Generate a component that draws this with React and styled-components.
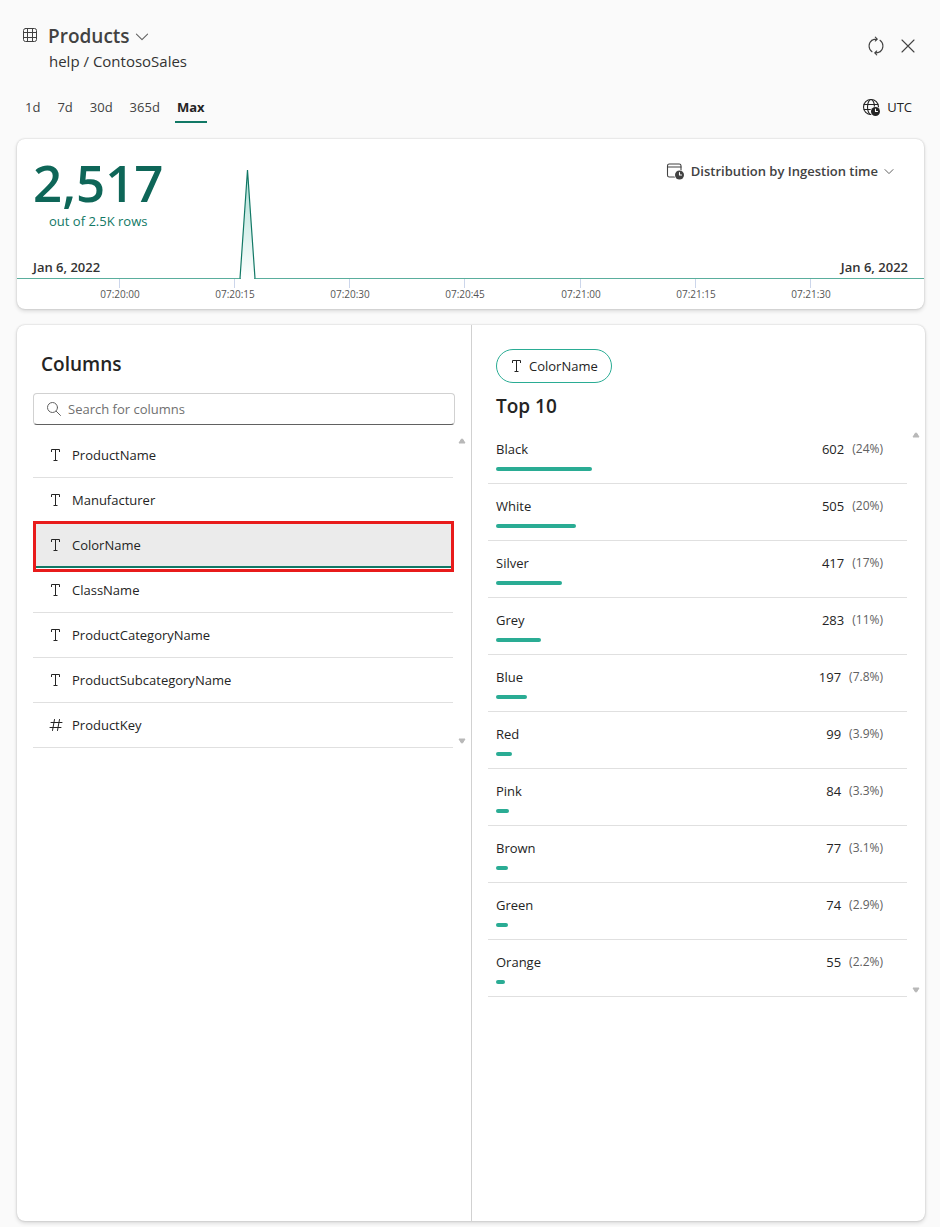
import React, { useState } from "react";
import styled, { createGlobalStyle } from "styled-components";

const GlobalStyle = createGlobalStyle`
  *, *::before, *::after { box-sizing: border-box; }
  body {
    margin: 0;
    background: #fafafa;
    color: #242424;
    font-family: "Segoe UI", "Open Sans", "Noto Sans", sans-serif;
    font-size: 13px;
    line-height: 20px;
  }
  button, input { font: inherit; color: inherit; }
  h1, h2, h3, p, ul { margin: 0; padding: 0; }
  ul { list-style: none; }
`;

const Page = styled.div`
  min-height: 100vh;
  display: flex;
  flex-direction: column;
  padding: 22px 15px 6px 17px;
`;

const Header = styled.header`
  display: flex;
  justify-content: space-between;
  align-items: flex-start;
  padding: 0 7px 0 5px;
`;

const Heading = styled.div`
  display: flex;
  gap: 10px;
  align-items: flex-start;

  & > svg { margin-top: 5px; }
`;

const PlainButton = styled.button`
  display: inline-flex;
  align-items: center;
  gap: ${(p) => p.$gap || 0}px;
  padding: 0;
  border: 0;
  background: none;
  cursor: pointer;
`;

const Title = styled.h1`
  font-size: 19px;
  line-height: 28px;
  font-weight: 600;
  color: #424242;
`;

const Path = styled.p`
  padding-left: 1px;
  font-size: 15px;
  line-height: 22px;
  color: #333;
`;

const Actions = styled.div`
  display: flex;
  gap: 12px;
  margin-top: 14px;
  color: #424242;
`;

const RangeBar = styled.nav`
  display: flex;
  justify-content: space-between;
  align-items: flex-start;
  margin-top: 25px;
  padding: 0 13px 0 8px;
`;

const Tabs = styled.div`
  display: flex;
  gap: 17px;
`;

const Tab = styled.button`
  padding: 0;
  height: 26px;
  border: 0;
  background: none;
  cursor: pointer;
  display: flex;
  flex-direction: column;
  justify-content: space-between;
  color: ${(p) => (p.$active ? "#242424" : "#424242")};
  font-weight: ${(p) => (p.$active ? 700 : 400)};

  &::after {
    content: "";
    height: 2px;
    margin: 0 -2px;
    align-self: stretch;
    background: ${(p) => (p.$active ? "#117865" : "transparent")};
  }
`;

const Card = styled.section`
  background: #fff;
  border-radius: 8px;
  box-shadow: 0 0 2px rgba(0, 0, 0, 0.2), 0 2px 4px rgba(0, 0, 0, 0.14);
`;

const ChartCard = styled(Card)`
  margin: 16px 1px 0 0;
  height: 170px;
  overflow: hidden;
  display: grid;

  & > * { grid-area: 1 / 1; }
`;

const ChartOverlay = styled.div`
  display: grid;
  grid-template-columns: 1fr auto;
  grid-template-rows: 118px 20px;
  padding: 0 16px;
  z-index: 1;
`;

const Total = styled.div`
  justify-self: start;
  padding-top: 12px;
  text-align: center;
  color: #0e6658;
`;

const TotalValue = styled.div`
  font-size: 51px;
  line-height: 62px;
  font-weight: 600;
`;

const TotalNote = styled.div`
  line-height: 16px;
  color: #117865;
`;

const DistributionButton = styled(PlainButton)`
  align-self: start;
  margin: 22px 14px 0 0;
  font-weight: 600;
  color: #424242;
`;

const ChartDate = styled.div`
  text-align: ${(p) => p.$align || "left"};
  font-weight: 600;
  color: #333;
`;

const Chart = styled.svg`
  width: 100%;
  height: 170px;
  display: block;
`;

const Panels = styled(Card)`
  margin-top: 16px;
  flex: 1;
  display: grid;
  grid-template-columns: 455fr 453fr;
`;

const ColumnsPanel = styled.section`
  padding: 25px 16px 0;
  border-right: 1px solid #d1d1d1;
`;

const TopPanel = styled.section`
  padding: 24px 5px 0 16px;
`;

const PanelTitle = styled.h2`
  padding-left: 8px;
  font-size: 19px;
  line-height: 28px;
  font-weight: 600;
  color: #242424;
`;

const SearchBox = styled.label`
  display: flex;
  align-items: center;
  gap: 6px;
  height: 32px;
  margin-top: 15px;
  padding: 0 12px;
  border: 1px solid #d1d1d1;
  border-bottom-color: #616161;
  border-radius: 4px;
  color: #616161;
`;

const SearchInput = styled.input`
  flex: 1;
  min-width: 0;
  border: 0;
  outline: 0;
  padding: 0;
  background: none;

  &::placeholder { color: #707070; opacity: 1; }
`;

const Scroller = styled.div`
  display: grid;
  grid-template-columns: 1fr 8px;
  column-gap: 5px;
`;

const ColumnScroller = styled(Scroller)`
  margin: 8px -11px 0 0;
`;

const ValueScroller = styled(Scroller)`
  margin-top: 7px;
`;

const ScrollTrack = styled.div`
  display: flex;
  flex-direction: column;
  justify-content: space-between;
  padding: 5px 0 4px;
`;

const ColumnRow = styled.li`
  height: 45px;
  border-bottom: 1px solid #e0e0e0;
  position: relative;
`;

const ColumnButton = styled.button`
  width: 100%;
  height: 100%;
  display: flex;
  align-items: center;
  gap: 8px;
  padding: 0 15px;
  border: 0;
  background: none;
  text-align: left;
  cursor: pointer;

  ${(p) =>
    p.$selected &&
    `
    position: absolute;
    top: -2px;
    left: 0;
    width: calc(100% + 1px);
    height: 51px;
    padding: 0 12px 3px;
    border: 3px solid #e81b1b;
    background: linear-gradient(#ebebeb 42px, #117865 42px, #117865 44px, #fff 44px);
  `}
`;

const Pill = styled.button`
  display: flex;
  align-items: center;
  gap: 4px;
  height: 34px;
  margin: 0 0 9px 8px;
  padding: 0 13px 0 12px;
  border: 1px solid #2aac94;
  border-radius: 17px;
  background: #fff;
  cursor: pointer;
`;

const ValueRow = styled.li`
  height: 57px;
  padding: 12px 10px 0 8px;
  border-bottom: 1px solid #e0e0e0;
`;

const ValueLine = styled.div`
  display: flex;
  align-items: center;
  gap: 8px;
  padding-right: 14px;
`;

const ValueName = styled.span`
  flex: 1;
`;

const Percent = styled.span`
  font-size: 12px;
  color: #616161;
`;

const Bar = styled.div`
  height: 4px;
  margin-top: 8px;
  border-radius: 2px;
  background: #2aac94;
`;

const Icon = ({ size = 20, children, ...rest }) => (
  <svg width={size} height={size} viewBox="0 0 20 20" fill="none" stroke="currentColor"
    strokeLinecap="round" strokeLinejoin="round" aria-hidden="true" {...rest}>
    {children}
  </svg>
);

const TableIcon = () => (
  <Icon size={16} viewBox="0 0 16 16" stroke="#424242">
    <rect x="1.5" y="1.5" width="13" height="13" rx="2" />
    <path d="M5.500 1.500v13M10.500 1.500v13M1.500 5.500h13M1.500 10.500h13" />
  </Icon>
);

const Chevron = ({ size }) => (
  <Icon size={size} viewBox="0 0 12 12" stroke="#616161" strokeWidth={size > 12 ? 0.9 : 1.2}>
    <path d="M1.200 4.300 6 9.100l4.800-4.800" />
  </Icon>
);

const RefreshIcon = () => (
  <Icon strokeWidth="1.1">
    <path d="M6 4.300A7 7 0 0 0 6 15.700M14 15.700A7 7 0 0 0 14 4.300" />
    <path d="M6 4.300Q8.300 2.900 11.200 3.100M9.300 1.200 11.300 3.100 9.300 5M14 15.700Q11.700 17.100 8.800 16.900M10.700 15 8.700 16.900 10.700 18.800" />
  </Icon>
);

const CloseIcon = () => (
  <Icon strokeWidth="1.1"><path d="m4 4 12 12M16 4 4 16" /></Icon>
);

const ClockBadge = ({ cx, cy, ring }) => (
  <>
    <circle cx={cx} cy={cy} r="5.200" fill={ring} stroke="none" />
    <circle cx={cx} cy={cy} r="4.500" fill="currentColor" stroke="none" />
    <path d={`M${cx} ${cy - 2.5}v2.500h2`} stroke="#fff" />
  </>
);

const GlobeClockIcon = () => (
  <Icon color="#242424" strokeWidth="1.1">
    <circle cx="10" cy="10" r="7.500" />
    <ellipse cx="10" cy="10" rx="3.500" ry="7.500" />
    <path d="M3.200 7.500h13.600M3.200 12.500h13.600" />
    <ClockBadge cx={14.5} cy={14.5} ring="#fafafa" />
  </Icon>
);

const WindowClockIcon = () => (
  <Icon color="#424242" strokeWidth="1.1">
    <rect x="2.500" y="3" width="13.500" height="13" rx="1.800" />
    <path d="M2.500 6h13.500" />
    <ClockBadge cx={14.5} cy={14} ring="#fff" />
  </Icon>
);

const SearchIcon = () => (
  <Icon size={16} viewBox="0 0 16 16">
    <circle cx="6.500" cy="6.500" r="5" />
    <path d="m10.200 10.200 4.300 4.300" />
  </Icon>
);

const TextIcon = () => (
  <Icon size={16} viewBox="0 0 16 16" stroke="#242424" strokeLinecap="butt">
    <path d="M3.500 5V2.500h8V5M7.500 2.500v11M5.500 13.500h4" />
  </Icon>
);

const HashIcon = () => (
  <Icon size={16} viewBox="0 0 16 16" stroke="#242424">
    <path d="M6.500 2.500 4.500 13.500M11.500 2.500 9.500 13.500M3 5.500h11M2 10.500h11" />
  </Icon>
);

const ScrollArrow = ({ down }) => (
  <svg width="8" height="6" viewBox="0 0 8 6" aria-hidden="true">
    <path d={down ? "M1 1h6L4.500 5h-1z" : "M1 5h6L4.500 1h-1z"} fill="#b8b8b8" stroke="#b8b8b8" strokeLinejoin="round" />
  </svg>
);

const ranges = ["1d", "7d", "30d", "365d", "Max"];

const ticks = [
  [103, "07:20:00"],
  [218, "07:20:15"],
  [333, "07:20:30"],
  [448, "07:20:45"],
  [564, "07:21:00"],
  [679, "07:21:15"],
  [794, "07:21:30"],
];

const columns = [
  ["ProductName", "text"],
  ["Manufacturer", "text"],
  ["ColorName", "text"],
  ["ClassName", "text"],
  ["ProductCategoryName", "text"],
  ["ProductSubcategoryName", "text"],
  ["ProductKey", "number"],
];

const values = [
  ["Black", 602, "24%"],
  ["White", 505, "20%"],
  ["Silver", 417, "17%"],
  ["Grey", 283, "11%"],
  ["Blue", 197, "7.8%"],
  ["Red", 99, "3.9%"],
  ["Pink", 84, "3.3%"],
  ["Brown", 77, "3.1%"],
  ["Green", 74, "2.9%"],
  ["Orange", 55, "2.2%"],
];

const TOTAL_ROWS = 2517;
const CHART_WIDTH = 907;
const percentX = (x) => `${(x / CHART_WIDTH) * 100}%`;

const IngestionChart = () => (
  <Chart role="img" aria-label="Rows by ingestion time">
    <defs>
      <linearGradient id="spike" x1="0" y1="0" x2="0" y2="1">
        <stop offset="0" stopColor="#2aac94" stopOpacity="0.4" />
        <stop offset="1" stopColor="#2aac94" stopOpacity="0" />
      </linearGradient>
    </defs>
    <rect x="0" y="139" width="100%" height="1" fill="#5aae9d" />
    <svg x={percentX(222)} y="30" width="18" height="110" overflow="visible">
      <path d="M2 109.500h13" stroke="#fff" strokeWidth="1.500" />
      <path d="M1 109.500 8.500 1 16 109.500" fill="url(#spike)" stroke="#117865" strokeWidth="1.200" />
    </svg>
    {ticks.map(([x, label]) => (
      <svg key={label} x={percentX(x)} overflow="visible">
        <line x1="-0.500" x2="-0.500" y1="140" y2="149" stroke="#ccd6eb" />
        <text x="0" y="159" textAnchor="middle" fontSize="10" fill="#555">{label}</text>
      </svg>
    ))}
  </Chart>
);

export default function App() {
  const [range, setRange] = useState("Max");
  const [selected, setSelected] = useState("ColorName");

  return (
    <>
      <GlobalStyle />
      <Page>
        <Header>
          <Heading>
            <TableIcon />
            <div>
              <Title>
                <PlainButton $gap={5}>Products <Chevron size={14} /></PlainButton>
              </Title>
              <Path>help / ContosoSales</Path>
            </div>
          </Heading>
          <Actions>
            <PlainButton aria-label="Refresh"><RefreshIcon /></PlainButton>
            <PlainButton aria-label="Close"><CloseIcon /></PlainButton>
          </Actions>
        </Header>

        <RangeBar aria-label="Time range">
          <Tabs>
            {ranges.map((name) => (
              <Tab key={name} $active={name === range} onClick={() => setRange(name)}>{name}</Tab>
            ))}
          </Tabs>
          <PlainButton $gap={6}><GlobeClockIcon />UTC</PlainButton>
        </RangeBar>

        <ChartCard>
          <IngestionChart />
          <ChartOverlay>
            <Total>
              <TotalValue>2,517</TotalValue>
              <TotalNote>out of 2.5K rows</TotalNote>
            </Total>
            <DistributionButton $gap={6}>
              <WindowClockIcon />Distribution by Ingestion time<Chevron size={10} />
            </DistributionButton>
            <ChartDate>Jan 6, 2022</ChartDate>
            <ChartDate $align="right">Jan 6, 2022</ChartDate>
          </ChartOverlay>
        </ChartCard>

        <Panels>
          <ColumnsPanel>
            <PanelTitle>Columns</PanelTitle>
            <SearchBox>
              <SearchIcon />
              <SearchInput type="text" aria-label="Search for columns" placeholder="Search for columns" />
            </SearchBox>
            <ColumnScroller>
              <ul>
                {columns.map(([name, kind]) => (
                  <ColumnRow key={name}>
                    <ColumnButton $selected={name === selected} onClick={() => setSelected(name)}>
                      {kind === "text" ? <TextIcon /> : <HashIcon />}
                      {name}
                    </ColumnButton>
                  </ColumnRow>
                ))}
              </ul>
              <ScrollTrack>
                <ScrollArrow />
                <ScrollArrow down />
              </ScrollTrack>
            </ColumnScroller>
          </ColumnsPanel>

          <TopPanel>
            <Pill><TextIcon />{selected}</Pill>
            <PanelTitle>Top 10</PanelTitle>
            <ValueScroller>
              <ul>
                {values.map(([name, count, share]) => (
                  <ValueRow key={name}>
                    <ValueLine>
                      <ValueName>{name}</ValueName>
                      <span>{count}</span>
                      <Percent>({share})</Percent>
                    </ValueLine>
                    <Bar style={{ width: `${(count / TOTAL_ROWS) * 100}%` }} />
                  </ValueRow>
                ))}
              </ul>
              <ScrollTrack>
                <ScrollArrow />
                <ScrollArrow down />
              </ScrollTrack>
            </ValueScroller>
          </TopPanel>
        </Panels>
      </Page>
    </>
  );
}
